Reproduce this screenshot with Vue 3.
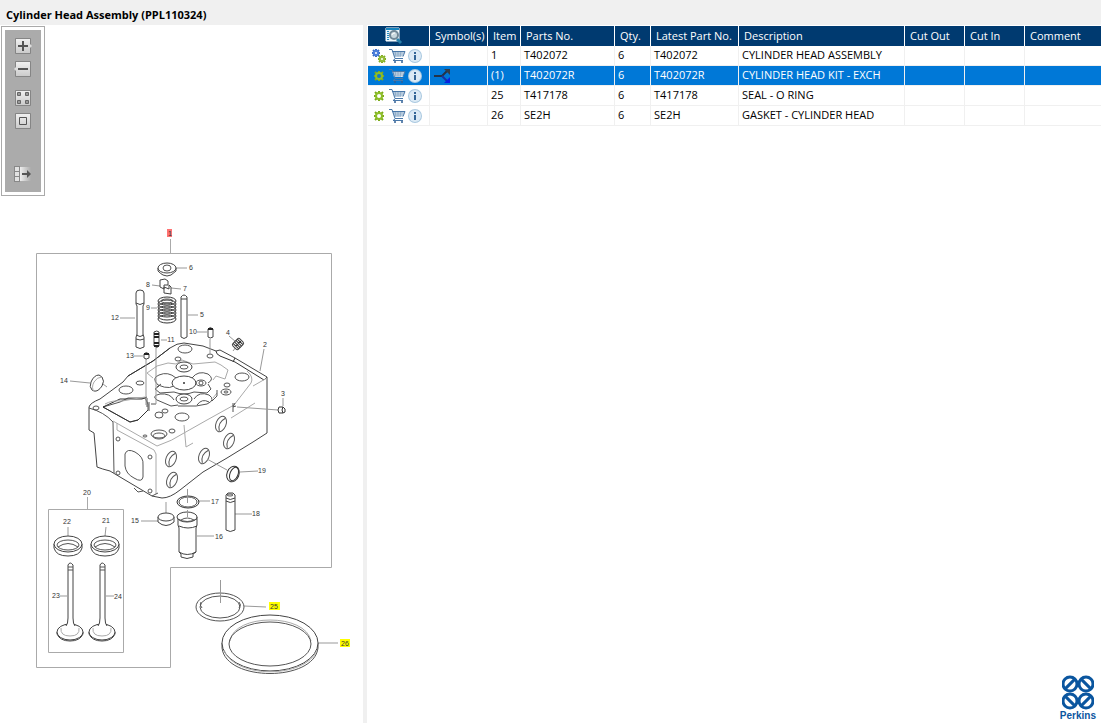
<script setup>
import { ref } from 'vue'

const selected = ref(1)

const rows = [
  { kind: 'gears', symbol: false, item: '1', part: 'T402072', qty: '6', latest: 'T402072', description: 'CYLINDER HEAD ASSEMBLY' },
  { kind: 'gear', symbol: true, item: '(1)', part: 'T402072R', qty: '6', latest: 'T402072R', description: 'CYLINDER HEAD KIT - EXCH' },
  { kind: 'gear', symbol: false, item: '25', part: 'T417178', qty: '6', latest: 'T417178', description: 'SEAL - O RING' },
  { kind: 'gear', symbol: false, item: '26', part: 'SE2H', qty: '6', latest: 'SE2H', description: 'GASKET - CYLINDER HEAD' }
]

const columns = ['Symbol(s)', 'Item', 'Parts No.', 'Qty.', 'Latest Part No.', 'Description', 'Cut Out', 'Cut In', 'Comment']

const callouts = [
  { n: 2, x: 265, y: 347 }, { n: 3, x: 283, y: 396 }, { n: 4, x: 228, y: 335 },
  { n: 5, x: 202, y: 317 }, { n: 6, x: 191, y: 270 }, { n: 7, x: 185, y: 291 },
  { n: 8, x: 148, y: 287 }, { n: 9, x: 148, y: 310 }, { n: 10, x: 193, y: 334 },
  { n: 11, x: 171, y: 342 }, { n: 12, x: 115, y: 320 }, { n: 13, x: 130, y: 358 },
  { n: 14, x: 64, y: 383 }, { n: 15, x: 135, y: 523 }, { n: 16, x: 219, y: 539 },
  { n: 17, x: 215, y: 504 }, { n: 18, x: 256, y: 516 }, { n: 19, x: 262, y: 473 },
  { n: 20, x: 87, y: 495 }, { n: 21, x: 106, y: 523 }, { n: 22, x: 67, y: 524 },
  { n: 23, x: 56, y: 598 }, { n: 24, x: 118, y: 599 }
]

const sideHoles = [[221, 424], [229, 441], [204, 456], [171, 459], [172, 480]]
const boltHoles = [[118, 439], [150, 457], [118, 473], [150, 491]]
const topHoles = [
  [185, 349, 7, 4], [242, 377, 7, 4], [126, 390, 7, 4], [182, 417, 7, 4], [159, 434, 8, 4],
  [140, 383, 4, 2], [178, 359, 3, 2], [210, 356, 3, 2], [227, 385, 3, 2], [226, 392, 5, 3],
  [226, 392, 2, 1], [96, 408, 3, 2], [159, 415, 4, 3], [165, 411, 3, 2], [145, 436, 2, 1],
  [172, 431, 3, 2], [159, 436, 6, 3], [184, 367, 4, 2], [201, 383, 5, 3], [201, 383, 2, 2],
  [184, 399, 4, 2]
]
const coils = [301, 304, 307, 310, 313, 316, 319]
const petals = [[8, 9, -45], [24, 9, 45], [8, 26, 45], [24, 26, -45]]
</script>

<template>
  <div class="viewer">
    <header class="title"><h1>Cylinder Head Assembly (PPL110324)</h1></header>
    <div class="body">
      <section class="drawing">
        <svg class="sheet" width="363" height="698" viewBox="0 25 363 698" role="img" aria-label="Exploded view of cylinder head assembly">
          <path class="frame" d="M36.500 253.500H331.500V567.500H170.500V667.500H36.500ZM48.500 509.500H123.500V652.500H48.500ZM170.500 239V253M87.500 497V509" />

          <!-- casting outline -->
          <path class="solid" d="M89 407Q90 403 100 399L123 382L128 376L153 361L170 348Q177 343 184 343L203 346L216 351L220 350L235 358L267 377V433L253 442L227 458L203 472L180 490Q170 498 162 498L152 496L115 474L110 471Q102 469 97 467L94 433L89 430Z" />
          <path class="line" d="M89 408Q104 412 113 422L114 473M103 407L130 422L138 420L148 410V404L145 398H128L120 402Z" />
          <path class="dark" d="M103 407L120 399H142L147 397M103 407L130 422L138 420L148 410M216 351Q216 354 220 356L235 362L264 380L267 377M235 358L233 362M128 376L153 361L170 348" />
          <path class="thin" d="M113 421L157 446Q172 441 184 433L207 420L234 405L251 383Q254 377 247 371M117 423V430L154 450Q157 453 156 460V494M105 404Q112 400 122 401L145 397M147 373L157 366L168 363L176 364L182 360L193 364L215 362L221 365L228 370L225 379L216 376L213 380M147 373L153 378M217 393L213 398M184 425L186 447L193 443M231 418L255 403M267 378L253 386" />
          <path class="line" d="M176 383Q172 391 158 385Q151 378 159 375Q168 371 176 378M192 378Q198 370 208 374Q215 379 208 383M157 387L161 384M208 384L211 389L207 393L194 392Q184 396 174 392L160 393L155 389L159 386M178 405L171 406L157 400Q151 396 160 394Q170 393 174 400M194 399Q199 391 209 395Q216 400 207 404L196 406H178M197 405Q202 398 209 402" />
          <path class="line" d="M147 398V407M149 402V411M151 404H156M217 390V396L212 401" />
          <ellipse class="solid" cx="184" cy="367" rx="8" ry="5" />
          <ellipse class="solid" cx="184" cy="383" rx="12" ry="7" />
          <ellipse class="solid" cx="184" cy="399" rx="8" ry="5" />
          <ellipse v-for="(h, i) in topHoles" :key="'t' + i" class="line" :cx="h[0]" :cy="h[1]" :rx="h[2]" :ry="h[3]" />
          <g v-for="(h, i) in sideHoles" :key="'s' + i" :transform="`translate(${h[0]} ${h[1]}) rotate(22)`">
            <ellipse class="line" rx="5" ry="8" />
            <path class="line" d="M2-7Q-4 0 1 7" />
          </g>
          <ellipse v-for="(h, i) in boltHoles" :key="'b' + i" class="line" :cx="h[0]" :cy="h[1]" rx="2" ry="2" />
          <path class="line" d="M125 454Q127 448 135 452Q144 457 143 465V477Q142 483 134 478Q126 474 125 466ZM134 488L138 492L143 491M152 496L158 493" />
          <circle class="black" cx="184" cy="383" r="1" />
          <path class="line" d="M233 403V412M235 403L233 407L236 406" />

          <!-- leaders -->
          <path class="leader" d="M176 268H187M171 288L181 289M152 285L160 286M151 308H157M188 315H198M197 332H207M161 340H167M120 318H135M134 356H143M70 381L90 383M103 384L107 387M229 336L236 342M236 347L233 351M264 349L260 371M283 398V406M237 407L278 410M210 339V354M156 348V404M146 359V405M207 459L227 470M240 472L258 471M198 501H210M166 502V513M141 521H158M197 536H214M235 514H252M68 527V536M106 527L105 536M60 596H67M106 596H114M244 606L266 607M318 643H338" />

          <!-- retainer, collets and spring -->
          <path class="solid" d="M158 268V271Q161 274 163 275Q167 277 171 275L176 271V268" />
          <ellipse class="solid" cx="167" cy="268" rx="9" ry="5" />
          <ellipse class="line" cx="167" cy="268" rx="4" ry="3" />
          <path class="solid" d="M160 280V287L164 289V285H168V281L165 279ZM164 287V293L171 294V287L169 285V289Z" />
          <ellipse v-for="y in coils" :key="y" class="dark" cx="167" :cy="y" rx="9" ry="4" />
          <ellipse class="line" cx="167" cy="301" rx="6" ry="2" />

          <!-- studs, guides and plugs -->
          <path class="solid" d="M136 293Q136 290 140 290Q144 290 144 293V304L143 306V335L144 337V347Q140 350 136 347V337L137 335V306L136 304ZM136 303Q140 306 144 303M136 335Q140 338 144 335M136 339Q140 341 144 339M181 297Q184 293 187 297V337Q184 340 181 337ZM181 299H187" />
          <path class="solid" d="M154 332Q157 330 159 332V346Q157 349 154 346Z" />
          <path class="coarse" d="M154 334H159M154 337H159M154 343H159M154 346H159" />
          <path class="solid" d="M208 329V337Q210 339 213 337V329Q210 326 208 329ZM144 354V358Q146 360 149 358V354Q146 351 144 354Z" />
          <path class="coarse" d="M208 329H213M144 354H149" />
          <path class="solid" d="M92 390Q89 387 91 382Q94 375 99 375L102 377Q105 381 102 386Q98 392 94 391Z" />
          <path class="thin" d="M94 391Q91 388 94 382Q97 377 102 377" />
          <g transform="translate(238 344) rotate(-45)">
            <rect class="solid" x="-5" y="-4" width="10" height="8" rx="2" />
            <path class="dark" d="M-3-4V4M-1-4V4M1-4V4M3-4V4M-3 0H4" />
          </g>
          <path class="dark" d="M279 407H283L285 409V412L283 413H279Q277 410 279 407M283 407Q281 410 283 413" />
          <ellipse class="dark" cx="233" cy="474" rx="6" ry="8" transform="rotate(22 233 474)" />
          <ellipse class="dark" cx="234" cy="474" rx="4" ry="7" transform="rotate(22 234 474)" />

          <!-- sleeve and rings -->
          <ellipse class="dark" cx="188" cy="502" rx="11" ry="6" />
          <ellipse class="line" cx="188" cy="502" rx="9" ry="5" />
          <path class="solid" d="M158 517V522Q166 529 174 522V517M178 517V525L179 528V552L181 554V557Q187 560 193 557V554L196 552V528L197 525V517M179 526Q188 530 197 526M179 552Q187 557 196 552" />
          <ellipse class="solid" cx="166" cy="517" rx="8" ry="4" />
          <ellipse class="solid" cx="187" cy="517" rx="10" ry="5" />
          <path class="line" d="M178 519Q187 524 197 519M181 520Q187 516 194 520" />
          <path class="leader" d="M187.500 489V503M187.500 510V517" />
          <path class="solid" d="M226 495L228 493H233L235 495V530Q230 533 226 530ZM226 498Q230 501 235 498M226 501Q230 504 235 501" />
          <ellipse class="line" cx="230" cy="495" rx="3" ry="1" />

          <!-- valve seats and valves -->
          <g v-for="x in [68, 105]" :key="x" :transform="`translate(${x} 544)`">
            <path class="solid" d="M-14 0V4Q-12 12 0 12Q12 12 14 4V0" />
            <ellipse class="solid" rx="14" ry="8" />
            <ellipse class="line" rx="11" ry="5" cy="1" />
            <path class="line" d="M-10 3Q0-4 10 3" />
          </g>
          <g v-for="x in [70, 102]" :key="x" :transform="`translate(${x} 632)`">
            <path class="solid" d="M-13 0V2Q-10 9 0 9Q10 9 13 2V0" />
            <ellipse class="solid" rx="13" ry="8" />
            <path class="thin" d="M-9-4Q-10 4 0 4Q10 4 9-4" />
            <path class="solid" d="M-4-6Q-2-8-2-14V-67Q0-71 3-67V-14Q3-8 5-6" />
            <path class="line" d="M-2-65H3M-2-62H3" />
          </g>

          <!-- O ring and gasket -->
          <ellipse class="line" cx="220" cy="607" rx="24" ry="14" />
          <ellipse class="line" cx="220" cy="607" rx="20" ry="11" />
          <path class="line" d="M201 602Q199 605 202 608M239 602Q242 605 239 608" />
          <path class="line" d="M222 643V648C226 682 314 682 318 648V643" />
          <ellipse class="solid" cx="270" cy="643" rx="48" ry="28" />
          <path class="thin" d="M224 650C234 679 306 679 317 650M230 641C234 613 306 613 311 641" />
          <ellipse class="line" cx="270" cy="644" rx="41" ry="22" />
          <path class="leader" d="M220.500 580V603" />

          <text v-for="c in callouts" :key="c.n" :x="c.x" :y="c.y">{{ c.n }}</text>
          <rect class="red" x="167" y="229" width="5" height="8" />
          <text class="key" x="170" y="236">1</text>
          <rect class="yellow" x="269" y="602" width="11" height="8" />
          <text class="key" x="274" y="609">25</text>
          <rect class="yellow" x="340" y="639" width="10" height="8" />
          <text class="key" x="345" y="646">26</text>
        </svg>

        <div class="toolbar" role="toolbar" aria-label="Drawing tools">
          <svg class="defs" width="0" height="0" aria-hidden="true">
            <linearGradient id="face" x1="0" y1="0" x2="0" y2="1"><stop offset="0" stop-color="#f0f0f0" /><stop offset="1" stop-color="#cbcbcb" /></linearGradient>
            <linearGradient id="fade"><stop offset="0" stop-color="#eeeeee" /><stop offset="1" stop-color="#ababab" /></linearGradient>
          </svg>
          <button aria-label="Zoom in"><svg width="20" height="18" viewBox="0 0 20 18"><rect class="edge" x="2" y="1" width="16" height="16" rx="1" /><path class="face" d="M3 2H17V7L19 9L17 11V16H3Z" /><path d="M5 9H15M10 4V14" stroke="#555" stroke-width="2" /></svg></button>
          <button aria-label="Zoom out"><svg width="20" height="18" viewBox="0 0 20 18"><rect class="edge" x="2" y="1" width="16" height="16" rx="1" /><path class="face" d="M3 2H17V16H3V11L1 9L3 7Z" /><path d="M5 9H15" stroke="#555" stroke-width="2" /></svg></button>
          <button class="gap" aria-label="Fit drawing"><svg width="20" height="18" viewBox="0 0 20 18"><rect class="edge" x="2" y="1" width="16" height="16" rx="1" /><rect class="face" x="3" y="2" width="14" height="14" /><path d="M4.500 3.500H7.500V6.500H4.500ZM12.500 3.500H15.500V6.500H12.500ZM4.500 11.500H7.500V14.500H4.500ZM12.500 11.500H15.500V14.500H12.500Z" fill="#999" stroke="#666" /></svg></button>
          <button aria-label="Actual size"><svg width="20" height="18" viewBox="0 0 20 18"><rect class="edge" x="2" y="1" width="16" height="16" rx="1" /><rect class="face" x="3" y="2" width="14" height="14" /><path d="M6.500 5.500H13.500V12.500H6.500Z" fill="none" stroke="#555" /></svg></button>
          <button class="last" aria-label="Move list"><svg width="20" height="18" viewBox="0 0 20 18"><rect x="7" y="2" width="11" height="14" fill="url(#fade)" /><path d="M1 1H7V17H1Z" fill="#888" /><path d="M2 2H6V6H2ZM2 7H6V11H2ZM2 12H6V16H2Z" fill="#e2e2e2" /><path d="M9 9H15" stroke="#555" stroke-width="2" /><path d="M14 5L18 9L14 13Z" fill="#555" /></svg></button>
        </div>
      </section>

      <div class="splitter"></div>

      <main class="list">
        <table>
          <colgroup>
            <col class="c-actions" /><col class="c-symbol" /><col class="c-item" /><col class="c-part" /><col class="c-qty" />
            <col class="c-latest" /><col class="c-desc" /><col class="c-cut" /><col class="c-cut" /><col />
          </colgroup>
          <thead>
            <tr>
              <th class="find">
                <button aria-label="Search parts"><svg width="18" height="18" viewBox="0 0 18 18"><path d="M1 1H14V14H1Z" fill="#e4f3fb" stroke="#fff" /><path d="M1 1H14V3H1Z" fill="#1784be" /><path d="M3 4V13" stroke="#268bc1" stroke-width="2" stroke-dasharray="1 1" /><path d="M12 12L16 16" stroke="#287fa9" stroke-width="3" /><circle cx="9" cy="8" r="4" fill="#c9d7de" stroke="#718797" stroke-width="2" /><path d="M7 8Q7 6 10 6" stroke="#fff" fill="none" /></svg></button>
              </th>
              <th v-for="c in columns" :key="c">{{ c }}</th>
            </tr>
          </thead>
          <tbody>
            <tr v-for="(r, i) in rows" :key="r.item" :class="{ selected: selected === i }" @click="selected = i">
              <td class="actions">
                <div class="tools">
                  <button aria-label="Part type">
                    <svg v-if="r.kind === 'gears'" width="16" height="16" viewBox="0 0 16 16" fill="none"><path d="M5 1V9M1 5H9M2 2L8 8M8 2L2 8" stroke="#386bc9" stroke-width="2" /><circle cx="5" cy="5" r="2" fill="#fff" stroke="#4c7fdb" stroke-width="2" /><path d="M11 7V15M7 11H15M8 8L14 14M14 8L8 14" stroke="#82ac24" stroke-width="2" /><circle cx="11" cy="11" r="2" fill="#fff" stroke="#95bd38" stroke-width="2" /></svg>
                    <svg v-else width="16" height="16" viewBox="0 0 16 16" fill="none"><path d="M8 3V13M3 8H13M4 4L12 12M12 4L4 12" stroke="#7dac1d" stroke-width="2" /><circle cx="8" cy="8" r="3" :fill="selected === i ? '#1478c8' : '#fff'" stroke="#8dbd27" stroke-width="2" /></svg>
                  </button>
                  <button aria-label="Add to cart">
                    <svg width="18" height="16" viewBox="0 0 18 16" fill="none"><path d="M4 3H17L15 9H6Z" fill="#dfe9f2" /><path d="M7 3L8 9M10 3V9M13 3L12 9M5 5H16M6 7H15" stroke="#8eacc8" /><path d="M1 1.500H4L7 10.500H15M4 3.500H17L15 8.500M7 11L5 12.500H15" stroke="#4a78a9" /><circle cx="7" cy="14" r="1" fill="#315f95" /><circle cx="14" cy="14" r="1" fill="#315f95" /></svg>
                  </button>
                  <button aria-label="Part information">
                    <svg width="16" height="16" viewBox="0 0 16 16"><circle cx="8" cy="8" r="7" fill="#a9c8e0" /><circle cx="8" cy="8" r="6" fill="#dceaf5" /><path d="M8 7V12" stroke="#346596" stroke-width="2" /><path d="M8 4V6" stroke="#346596" stroke-width="2" /></svg>
                  </button>
                </div>
              </td>
              <td class="symbol">
                <svg v-if="r.symbol" width="16" height="14" viewBox="0 0 16 14"><path d="M0 7H8L13 2" fill="none" stroke="#243347" stroke-width="2" /><path d="M8 7L13 12" stroke="#1732a5" stroke-width="2" /><path d="M10 0H16V6Z" fill="#333d49" /><path d="M10 14H16V8Z" fill="#0820df" /></svg>
              </td>
              <td>{{ r.item }}</td>
              <td>{{ r.part }}</td>
              <td>{{ r.qty }}</td>
              <td>{{ r.latest }}</td>
              <td>{{ r.description }}</td>
              <td></td>
              <td></td>
              <td></td>
            </tr>
          </tbody>
        </table>
        <footer class="brand">
          <svg width="32" height="35" viewBox="0 0 32 35" fill="none" stroke="#0b569f" stroke-width="3" aria-hidden="true">
            <g v-for="(p, i) in petals" :key="i" :transform="`translate(${p[0]} ${p[1]}) rotate(${p[2]})`">
              <circle r="7" /><path d="M-8 0H8" />
            </g>
          </svg>
          <span>Perkins</span>
        </footer>
      </main>
    </div>
  </div>
</template>

<style>
body {
  margin: 0;
}
</style>

<style scoped>
.viewer {
  display: flex;
  flex-direction: column;
  min-height: 100vh;
  background: #fff;
  color: #000;
  font: 11px/14px "Open Sans", "Noto Sans", sans-serif;
}
.title {
  background: #f0f0f0;
  padding: 8px 6px 3px;
}
h1 {
  margin: 0;
  font-size: 11px;
  line-height: 14px;
  font-weight: 700;
}
.body {
  flex: 1;
  display: flex;
}
.drawing {
  position: relative;
  flex: none;
}
.sheet {
  display: block;
}
.sheet path, .sheet ellipse {
  fill: none;
  stroke-linejoin: round;
}
.sheet .frame { stroke: #aaa; }
.sheet .leader { stroke: #999; stroke-width: 1px; }
.sheet .line { stroke: #555; }
.sheet .thin { stroke: #aaa; }
.sheet .dark { stroke: #333; }
.sheet .coarse { stroke: #222; stroke-width: 2px; }
.sheet .solid { fill: #fff; stroke: #444; }
.black { fill: #333; }
.red { fill: #ff7373; }
.yellow { fill: #ff0; }
.sheet text {
  font: 7px "Liberation Sans", sans-serif;
  fill: #333;
  text-anchor: middle;
}
.toolbar {
  position: absolute;
  top: 1px;
  left: 1px;
  display: flex;
  flex-direction: column;
  align-items: center;
  gap: 5px;
  box-sizing: border-box;
  width: 44px;
  padding: 10px 3px 12px;
  border: 1px solid #aaa;
  background: #ababab;
  box-shadow: inset 0 0 0 3px #fff;
}
button {
  display: block;
  margin: 0;
  padding: 0;
  border: 0;
  background: none;
  cursor: pointer;
}
button svg { display: block; }
.defs { position: absolute; }
.edge { fill: #858585; }
.face { fill: url(#face); }
.gap { margin-top: 6px; }
.last { margin-top: 30px; }
.splitter {
  flex: none;
  width: 4px;
  background: #f0f0f0;
}
.list {
  flex: 1;
  min-width: 0;
  display: flex;
  flex-direction: column;
  justify-content: space-between;
}
table {
  width: 100%;
  table-layout: fixed;
  border-collapse: separate;
  border-spacing: 0;
  border-left: 1px solid #fff;
  border-top: 1px solid #fff;
}
.c-actions { width: 62px; }
.c-symbol { width: 58px; }
.c-item { width: 33px; }
.c-part { width: 94px; }
.c-qty { width: 36px; }
.c-latest { width: 88px; }
.c-desc { width: 166px; }
.c-cut { width: 60px; }
th, td {
  box-sizing: border-box;
  height: 20px;
  padding: 0 0 1px 3px;
  border-right: 1px solid #f0f0f0;
  border-bottom: 1px solid #f0f0f0;
  text-align: left;
  font-weight: 400;
  line-height: 14px;
  white-space: nowrap;
}
th {
  padding: 0 0 0 5px;
  background: #003a70;
  color: #fff;
  border-right-color: #fff;
  border-bottom: 0;
}
th:last-child, td:last-child { border-right: 0; }
.find { padding: 0 0 0 17px; }
.actions { padding: 0 0 0 3px; }
.symbol { padding: 0 0 0 4px; }
.symbol svg { display: block; }
.tools {
  display: flex;
  align-items: center;
  gap: 1px;
}
.selected td {
  background: #0078d7;
  color: #fff;
}
.brand {
  display: flex;
  flex-direction: column;
  align-items: center;
  align-self: flex-end;
  padding: 0 5px 1px 0;
  color: #0b569f;
  font: 700 10px/12px "Liberation Sans", sans-serif;
}
.brand svg { display: block; }
</style>
